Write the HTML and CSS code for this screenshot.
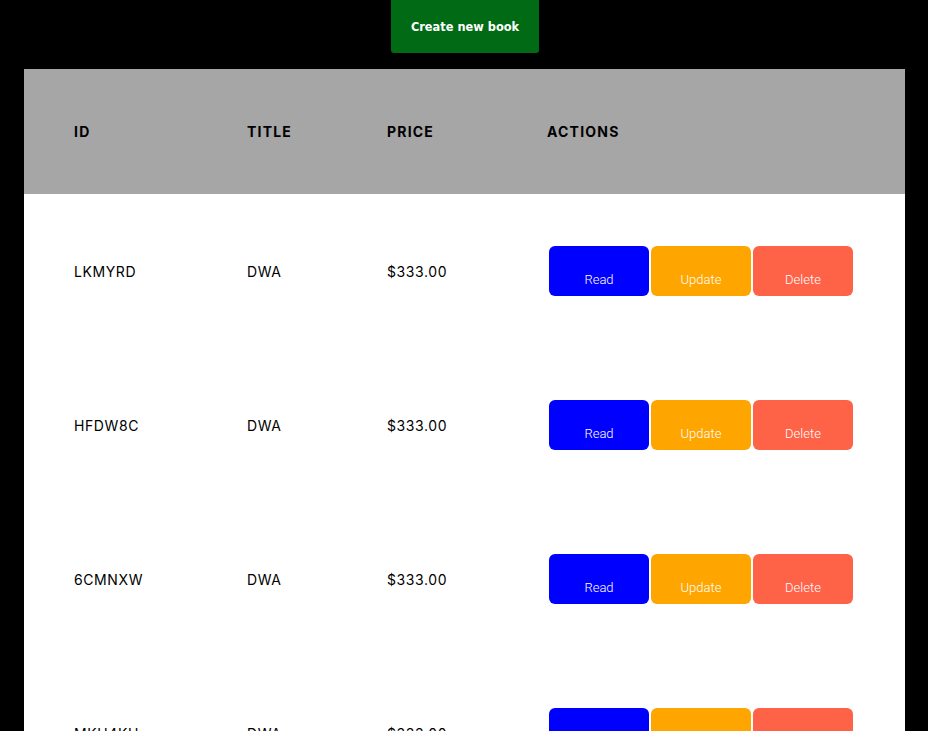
FILE: index.html
```html
<!DOCTYPE html>
<html>
<head>
<meta charset="utf-8">
<link rel="stylesheet" href="styles.css">
</head>
<body>
<div class="top">
  <button class="create">Create new book</button>
</div>
<div class="table">
  <div class="row head">
    <div class="cell">ID</div>
    <div class="cell">TITLE</div>
    <div class="cell">PRICE</div>
    <div class="cell">ACTIONS</div>
  </div>
  <div class="row">
    <div class="cell">LKMYRD</div>
    <div class="cell">DWA</div>
    <div class="cell">$333.00</div>
    <div class="cell actions"><button class="btn read">Read</button><button class="btn update">Update</button><button class="btn delete">Delete</button></div>
  </div>
  <div class="row">
    <div class="cell">HFDW8C</div>
    <div class="cell">DWA</div>
    <div class="cell">$333.00</div>
    <div class="cell actions"><button class="btn read">Read</button><button class="btn update">Update</button><button class="btn delete">Delete</button></div>
  </div>
  <div class="row">
    <div class="cell">6CMNXW</div>
    <div class="cell">DWA</div>
    <div class="cell">$333.00</div>
    <div class="cell actions"><button class="btn read">Read</button><button class="btn update">Update</button><button class="btn delete">Delete</button></div>
  </div>
  <div class="row">
    <div class="cell">MKH4KH</div>
    <div class="cell">DWA</div>
    <div class="cell">$333.00</div>
    <div class="cell actions"><button class="btn read">Read</button><button class="btn update">Update</button><button class="btn delete">Delete</button></div>
  </div>
</div>
</body>
</html>
```
FILE: styles.css
```css
html, body {
  margin: 0;
  padding: 0;
  background: #000;
}
body {
  font-family: "Inter", "Noto Sans", sans-serif;
}
.top {
  display: flex;
  justify-content: center;
  height: 53px;
  margin-bottom: 16px;
  padding-left: 2px;
}
.create {
  width: 148px;
  height: 53px;
  border: none;
  background: #006b14;
  color: #fff;
  font-family: "DejaVu Sans", Verdana, sans-serif;
  font-weight: bold;
  font-size: 11.4px;
  border-radius: 0 0 3px 3px;
  padding: 0;
}
.table {
  margin: 0 23px 0 24px;
  background: #fff;
}
.row {
  display: grid;
  grid-template-columns: 173px 140px 160px 1fr;
  padding-left: 50px;
  height: 154px;
  align-items: center;
  font-size: 14px;
  letter-spacing: 0.6px;
  color: #000;
}
.row.head {
  height: 125px;
  background: #a6a6a6;
  font-weight: 700;
  letter-spacing: 1.2px;
}
.actions {
  display: flex;
  gap: 2px;
  padding-left: 2px;
  letter-spacing: 0;
}
.btn {
  width: 100px;
  height: 50px;
  border: none;
  border-radius: 6px;
  color: #fff;
  font-family: Roboto, sans-serif;
  font-weight: 300;
  font-size: 13px;
  padding: 16px 0 0 0;
}
.read { background: #0000ff; }
.update { background: #ffa500; }
.delete { background: #ff6347; }
```
